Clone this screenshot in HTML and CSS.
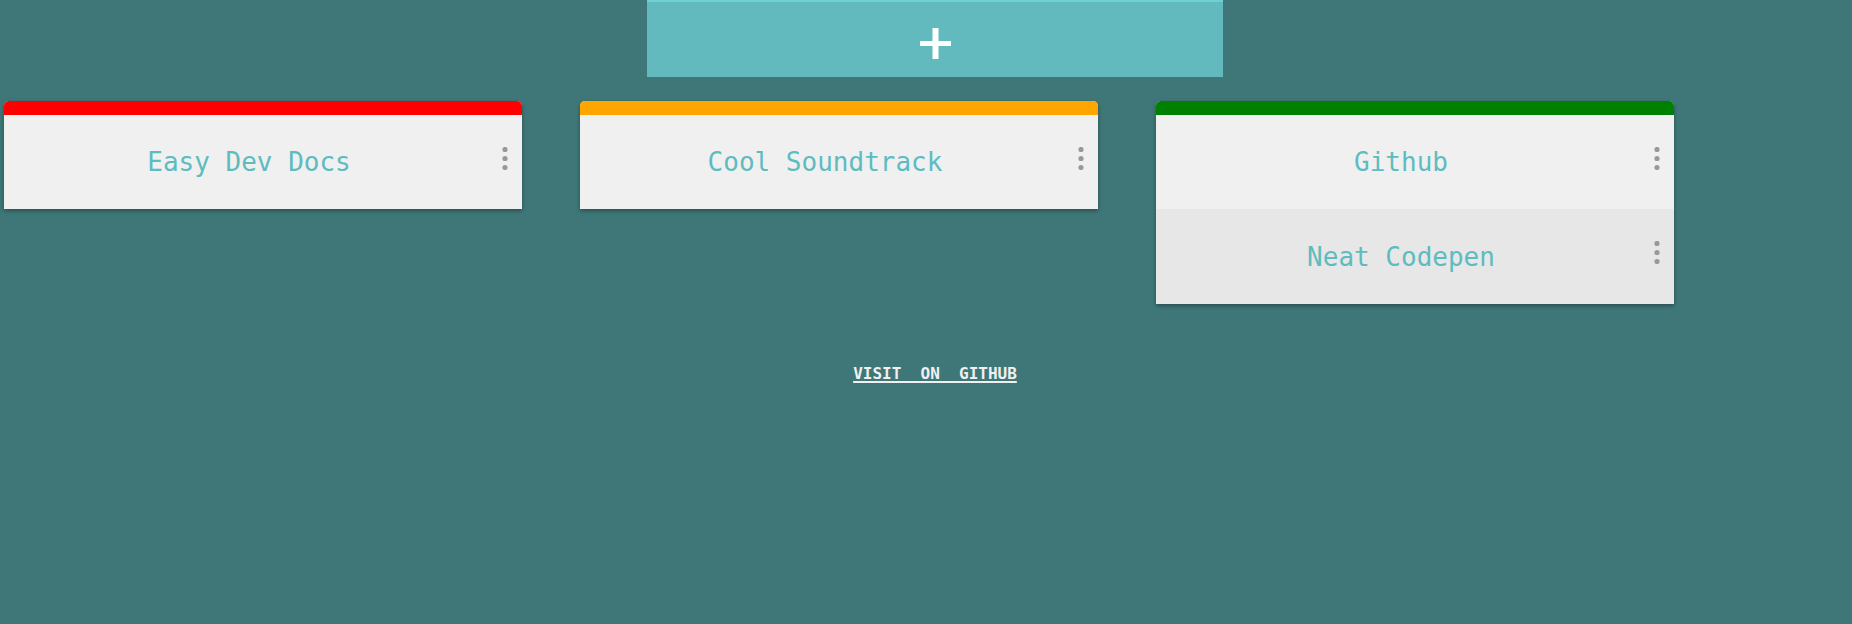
FILE: index.html
```html
<!DOCTYPE html>
<html lang="en">
<head>
<meta charset="utf-8">
<title>Bookmarks</title>
<link rel="stylesheet" href="styles.css">
</head>
<body>
  <header class="topbar">
    <button class="add-btn" type="button" aria-label="Add">
      <svg class="plus" width="31" height="31" viewBox="0 0 31 31" aria-hidden="true">
        <rect x="12.5" y="0" width="6" height="31" fill="#fff"/>
        <rect x="0" y="13" width="31" height="5" fill="#fff"/>
      </svg>
    </button>
  </header>

  <main class="board">
    <section class="card">
      <div class="card-bar bar-red"></div>
      <div class="item">
        <span class="item-title">Easy Dev Docs</span>
        <span class="menu"><svg width="6" height="23" viewBox="0 0 6 23"><circle cx="3" cy="2.5" r="2.6"/><circle cx="3" cy="11.5" r="2.6"/><circle cx="3" cy="20.5" r="2.6"/></svg></span>
      </div>
    </section>

    <section class="card">
      <div class="card-bar bar-orange"></div>
      <div class="item">
        <span class="item-title">Cool Soundtrack</span>
        <span class="menu"><svg width="6" height="23" viewBox="0 0 6 23"><circle cx="3" cy="2.5" r="2.6"/><circle cx="3" cy="11.5" r="2.6"/><circle cx="3" cy="20.5" r="2.6"/></svg></span>
      </div>
    </section>

    <section class="card">
      <div class="card-bar bar-green"></div>
      <div class="item">
        <span class="item-title">Github</span>
        <span class="menu"><svg width="6" height="23" viewBox="0 0 6 23"><circle cx="3" cy="2.5" r="2.6"/><circle cx="3" cy="11.5" r="2.6"/><circle cx="3" cy="20.5" r="2.6"/></svg></span>
      </div>
      <div class="item item-alt">
        <span class="item-title">Neat Codepen</span>
        <span class="menu"><svg width="6" height="23" viewBox="0 0 6 23"><circle cx="3" cy="2.5" r="2.6"/><circle cx="3" cy="11.5" r="2.6"/><circle cx="3" cy="20.5" r="2.6"/></svg></span>
      </div>
    </section>
  </main>

  <footer class="footer">
    <a class="gh-link" href="#">VISIT ON GITHUB</a>
  </footer>
</body>
</html>
```

FILE: styles.css
```css
html, body {
  margin: 0;
  padding: 0;
}

body {
  background: #3f7778;
  font-family: "DejaVu Sans Mono", "Liberation Mono", monospace;
  min-height: 624px;
}

.topbar {
  display: flex;
  padding-left: 647px;
}

.add-btn {
  width: 576px;
  height: 77px;
  margin: 0;
  padding: 0;
  border: none;
  border-top: 2px solid #6cd2d6;
  background: #62babe;
  display: flex;
  align-items: center;
  justify-content: center;
  cursor: pointer;
}

.plus {
  display: block;
  margin-top: 7px;
}

.board {
  display: flex;
  align-items: flex-start;
  gap: 58px;
  padding: 24px 0 0 4px;
}

.card {
  width: 518px;
  background: #f0f0f0;
  border-radius: 5px 5px 0 0;
  box-shadow: 0 2px 4px rgba(0, 0, 0, 0.35);
}

.card-bar {
  height: 14px;
  border-radius: 5px 5px 0 0;
}

.bar-red { background: #ff0000; }
.bar-orange { background: #ffa500; }
.bar-green { background: #008000; }

.item {
  height: 94px;
  display: flex;
  align-items: center;
  background: #f0f0f0;
}

.item-alt {
  background: #e7e7e7;
  height: 95px;
}

.item-title {
  flex: 1;
  text-align: center;
  font-size: 26px;
  color: #5dbcc0;
}

.menu {
  width: 28px;
  box-sizing: border-box;
  padding-left: 8px;
  display: flex;
  margin-bottom: 8px;
}

.menu svg {
  display: block;
  fill: #999999;
}

.footer {
  margin-left: 647px;
  width: 576px;
  margin-top: 60px;
  text-align: center;
}

.gh-link {
  font-size: 16px;
  font-weight: bold;
  color: #f0f0f0;
  text-decoration: underline;
  text-decoration-thickness: 2px;
  text-underline-offset: 2px;
  word-spacing: 0.6em;
}
```
